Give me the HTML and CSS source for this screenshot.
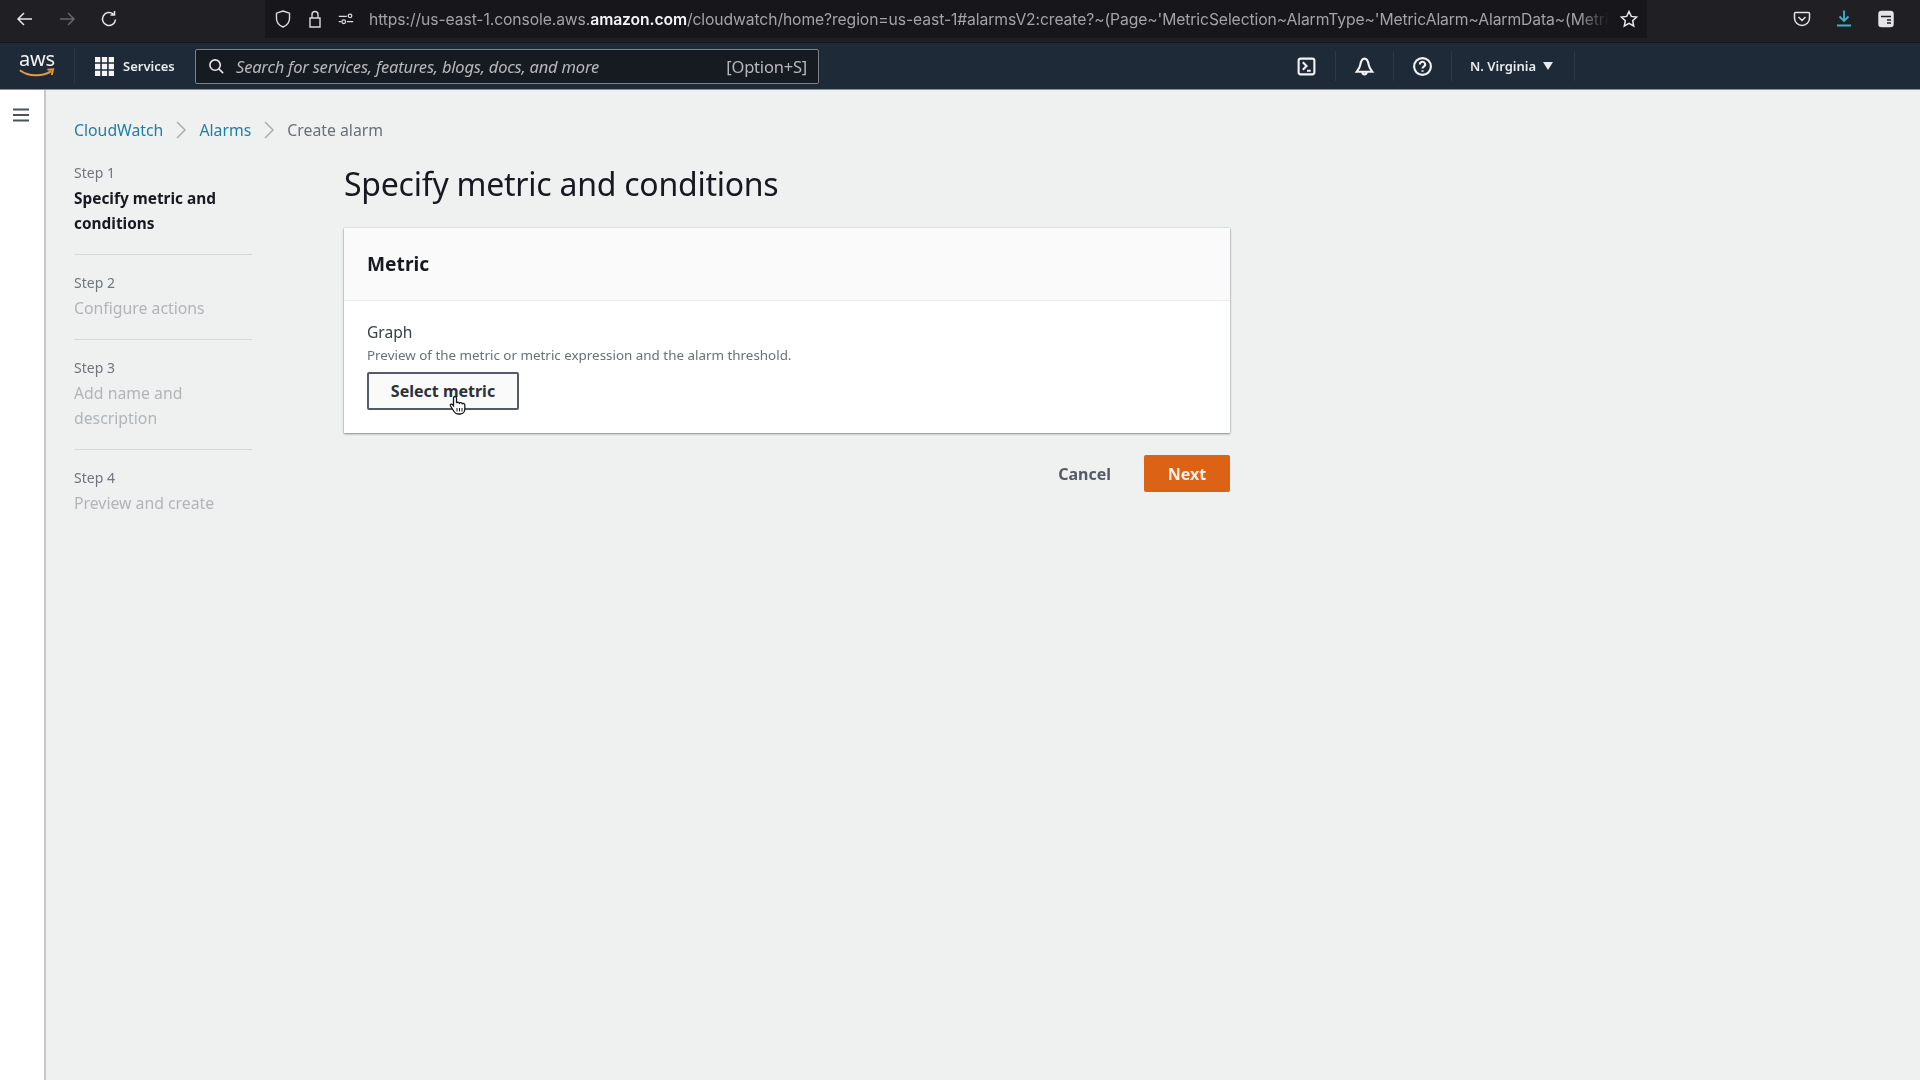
FILE: index.html
```html
<!DOCTYPE html>
<html lang="en">
<head>
<meta charset="utf-8">
<title>Create alarm | CloudWatch</title>
<link rel="stylesheet" href="styles.css">
</head>
<body>
<div class="browser">
  <div class="browser-nav">
    <svg class="bi" viewBox="0 0 20 20"><path d="M17 10H3M9 4l-6 6 6 6"/></svg>
    <svg class="bi dim" viewBox="0 0 20 20"><path d="M3 10h14M11 4l6 6-6 6"/></svg>
    <svg class="bi" viewBox="0 0 20 20"><path d="M16.500 10.500a6.500 6.500 0 1 1-2.200-5.400M15.500 2v4h-4"/></svg>
  </div>
  <div class="urlbar">
    <svg class="ui shield" viewBox="0 0 20 20"><path d="M10 2l6.500 2.200v5.300c0 4-3 7-6.500 8.500-3.500-1.500-6.500-4.500-6.500-8.500V4.200z"/></svg>
    <svg class="ui lock" viewBox="0 0 20 20"><path d="M5 9h10v9H5zM7 9V5.500a3 3 0 0 1 6 0V9"/></svg>
    <svg class="ui perms" viewBox="0 0 20 20"><path d="M2 7h9M2 13h3M11 13h7"/><circle cx="14.500" cy="6.500" r="2"/><circle cx="7.500" cy="13" r="2"/></svg>
    <div class="url">https://us-east-1.console.aws.<b>amazon.com</b>/cloudwatch/home?region=us-east-1#alarmsV2:create?~(Page~'MetricSelection~AlarmType~'MetricAlarm~AlarmData~(Metric</div>
    <svg class="star" viewBox="0 0 20 20"><path d="M10 2.500l2.300 4.900 5.300.7-3.900 3.600 1 5.300-4.700-2.600-4.700 2.600 1-5.300-3.900-3.600 5.300-.7z"/></svg>
  </div>
  <div class="browser-tools">
    <svg class="tool" viewBox="0 0 20 20"><path d="M3.500 3.500h13a1 1 0 0 1 1 1V9a7.500 7.500 0 0 1-15 0V4.500a1 1 0 0 1 1-1zM6.500 8l3.500 3.500L13.500 8"/></svg>
    <svg class="tool dl" viewBox="0 0 20 20"><path d="M10 1.500v10.500M5.500 7.500L10 12l4.500-4.500M3 16.500h14"/></svg>
    <svg class="tool" viewBox="0 0 20 20"><rect x="3" y="2.500" width="14" height="15" rx="2.500" fill="#e4e4e6"/><path class="cut" d="M5 7.500h10M11 11h4M11 14h4"/></svg>
  </div>
</div>

<header class="topnav">
  <div class="logo">
    <span class="logo-text">aws</span>
    <svg class="smile" viewBox="0 0 40 11"><path d="M2 2c9 7 24 7 33 1"/><path d="M31 1.500l6-.5-1.500 6"/></svg>
  </div>
  <div class="services">
    <svg class="grid-ic" viewBox="0 0 18 18"><path d="M0 0h5v5H0zM6.500 0h5v5h-5zM13 0h5v5h-5zM0 6.500h5v5H0zM6.500 6.500h5v5h-5zM13 6.500h5v5h-5zM0 13h5v5H0zM6.500 13h5v5h-5zM13 13h5v5h-5z"/></svg>
    <span>Services</span>
  </div>
  <div class="search">
    <svg class="search-ic" viewBox="0 0 18 18"><circle cx="7.500" cy="7.500" r="5.500"/><path d="M11.500 11.500L16 16"/></svg>
    <span class="search-text">Search for services, features, blogs, docs, and more</span>
    <span class="search-key">[Option+S]</span>
  </div>
  <div class="nav-right">
    <div class="nav-item"><svg class="nav-ic" viewBox="0 0 20 20"><rect x="2.500" y="2.500" width="15" height="15" rx="2"/><path d="M6.500 6l3.500 3.500-3.500 3.500M10.500 14h3.500"/></svg></div>
    <div class="nav-item"><svg class="nav-ic" viewBox="0 0 20 20"><path d="M10 2.500c3 0 3.500 3 4 6s2.500 5 3.500 6.500h-15c1-1.500 3-3.500 3.500-6.500s1-6 4-6zM8 15.500a2 2 0 0 0 4 0"/></svg></div>
    <div class="nav-item"><svg class="nav-ic" viewBox="0 0 20 20"><circle cx="10" cy="10" r="8"/><path d="M7.500 8a2.500 2.500 0 1 1 3.600 2.200c-.8.400-1.100 1-1.100 1.800M10 13.500v1.500"/></svg></div>
    <div class="nav-item region"><span>N. Virginia</span><i class="caret"></i></div>
  </div>
</header>

<div class="page">
  <aside class="rail">
    <svg class="burger" viewBox="0 0 16 14"><path d="M0 1.500h16M0 7h16M0 12.500h16"/></svg>
  </aside>
  <main class="content">
    <nav class="crumbs">
      <a>CloudWatch</a>
      <svg class="chev" viewBox="0 0 10 18"><path d="M1 1l8 8-8 8"/></svg>
      <a>Alarms</a>
      <svg class="chev" viewBox="0 0 10 18"><path d="M1 1l8 8-8 8"/></svg>
      <span>Create alarm</span>
    </nav>
    <div class="wizard">
      <ol class="steps">
        <li class="step"><small>Step 1</small><strong class="active">Specify metric and conditions</strong></li>
        <li class="step"><small>Step 2</small><strong>Configure actions</strong></li>
        <li class="step"><small>Step 3</small><strong>Add name and description</strong></li>
        <li class="step"><small>Step 4</small><strong>Preview and create</strong></li>
      </ol>
      <section class="form">
        <h1>Specify metric and conditions</h1>
        <div class="card">
          <div class="card-head"><h2>Metric</h2></div>
          <div class="card-body">
            <div class="label">Graph</div>
            <div class="desc">Preview of the metric or metric expression and the alarm threshold.</div>
            <button class="btn-select">Select metric
              <svg class="cursor" viewBox="0 0 18 20"><path d="M6 1.500c1 0 1.500.7 1.500 1.500v5c.5-1 2.500-1 3 .2.600-.9 2.400-.7 2.800.5.700-.6 2.500-.2 2.500 1.300v4c0 2.500-1.500 5-4.500 5H9c-2 0-3-1-4-2.500L1.500 11c-.8-1.300.9-2.500 2-1.500l1 1.200V3c0-.8.500-1.500 1.500-1.500z"/><path class="lines" d="M8 13v3.500M10.500 13v3.500M13 13v3.500"/></svg>
            </button>
          </div>
        </div>
        <div class="actions">
          <button class="btn-cancel">Cancel</button>
          <button class="btn-next">Next</button>
        </div>
      </section>
    </div>
  </main>
</div>
</body>
</html>
```
FILE: styles.css
```css
* { box-sizing: border-box; }
html, body { margin: 0; height: 1080px; overflow: hidden; }
body { font-family: "Noto Sans", sans-serif; background: #eff1f0; color: #16191f; filter: blur(.35px); }
svg { display: block; fill: none; }

/* browser chrome */
.browser { height: 43px; background: #1f1f24; display: flex; align-items: flex-start; border-bottom: 1px solid #14161b; }
.browser-nav { width: 265px; height: 38px; display: flex; align-items: center; gap: 22px; padding-left: 15px; }
.bi { width: 20px; height: 20px; stroke: #e6e6e8; stroke-width: 1.5; }
.bi.dim { stroke: #66666b; }
.urlbar { width: 1382px; height: 38px; background: #17171b; display: flex; align-items: center; padding-left: 8px; position: relative; }
.ui { width: 20px; height: 20px; stroke: #dcdcde; stroke-width: 1.4; flex: none; margin-right: 12px; }
.ui.perms { width: 18px; height: 18px; margin-right: 14px; }
.url { font-family: Inter, "Liberation Sans", sans-serif; font-size: 15.700px; color: #a3a3a8; white-space: nowrap; overflow: hidden; width: 1240px; flex: none; letter-spacing: -.1px; -webkit-mask-image: linear-gradient(to right, #000 97.500%, transparent); mask-image: linear-gradient(to right, #000 97.500%, transparent); }
.url b { color: #f5f5f6; font-weight: 600; }
.star { width: 20px; height: 20px; stroke: #e6e6e8; stroke-width: 1.5; margin-left: 10px; flex: none; }
.browser-tools { flex: 1; height: 38px; display: flex; align-items: center; justify-content: flex-end; gap: 22px; padding-right: 24px; }
.tool { width: 20px; height: 20px; stroke: #e4e4e6; stroke-width: 1.5; }
.tool.dl { stroke: #3fb4c4; stroke-width: 1.8; }
.cut { stroke: #1f1f24; }

/* aws nav */
.topnav { height: 47px; background: #1e2a38; border-bottom: 1px solid #8a8e93; display: flex; align-items: center; position: relative; }
.logo { width: 75px; height: 34px; padding-left: 19px; position: relative; border-right: 1px solid #2c3947; flex: none; }
.logo-text { display: block; font-family: "Noto Sans", sans-serif; font-size: 20px; line-height: 20px; color: #f4f4f4; letter-spacing: -.2px; }
.smile { position: absolute; left: 18px; top: 19px; width: 38px; height: 11px; stroke: #e59a3c; stroke-width: 2; }
.services { width: 120px; padding-left: 20px; display: flex; align-items: center; gap: 9px; font-size: 13px; font-weight: 600; color: #e9ebed; flex: none; }
.grid-ic { width: 19px; height: 19px; fill: #f5f5f5; }
.search { width: 624px; height: 35px; background: #161b22; border: 1px solid #7d8188; border-radius: 2px; display: flex; align-items: center; padding: 0 11px 0 12px; flex: none; }
.search-ic { width: 17px; height: 17px; stroke: #e5e7e8; stroke-width: 1.7; flex: none; margin-right: 11px; }
.search-text { font-style: italic; font-size: 16.500px; color: #b6b8bb; flex: 1; white-space: nowrap; letter-spacing: -.2px; }
.search-key { font-size: 16.500px; color: #b6b8bb; white-space: nowrap; letter-spacing: -.2px; }
.nav-right { display: flex; align-items: center; margin-left: 459px; }
.nav-item { height: 30px; width: 58px; display: flex; align-items: center; justify-content: center; border-right: 1px solid #2c3947; flex: none; }
.nav-ic { width: 21px; height: 21px; stroke: #f2f3f3; stroke-width: 2; }
.nav-item.region { width: 123px; justify-content: flex-start; padding-left: 18px; gap: 7px; font-size: 13px; font-weight: 600; color: #e9ebed; }
.caret { width: 0; height: 0; border: 5px solid transparent; border-top: 8px solid #e9ebed; border-bottom: 0; }

/* page */
.page { display: flex; height: 990px; }
.rail { width: 46px; background: #fff; border-right: 2px solid #c6c8c9; padding: 18px 0 0 13px; flex: none; }
.burger { width: 16px; height: 14px; stroke: #4b5259; stroke-width: 2; }
.content { flex: 1; padding: 0 0 0 28px; }
.crumbs { height: 30px; margin-top: 25px; display: flex; align-items: center; font-size: 15.800px; color: #687078; }
.crumbs a { color: #1d7fa5; }
.chev { width: 10px; height: 18px; stroke: #a8acaf; stroke-width: 1.5; margin: 0 13px; }
.wizard { display: grid; grid-template-columns: 178px 886px; column-gap: 92px; margin-top: 11px; }

.steps { list-style: none; margin: 0; padding: 4px 0 0; }
.step { padding-bottom: 18px; margin-bottom: 15.500px; border-bottom: 1px solid #d5d7d8; }
.step:last-child { border: 0; }
.step small { display: block; font-size: 14px; line-height: 25.500px; color: #6f767d; }
.step strong { display: block; font-size: 15.800px; line-height: 25px; font-weight: 400; color: #b0b5b8; }
.step strong.active { font-size: 15.400px; font-weight: 700; color: #16191f; }

.form h1 { margin: 6px 0 0; font-size: 32px; line-height: 44px; font-weight: 400; color: #16191f; letter-spacing: -.25px; }
.card { margin-top: 22px; background: #fff; box-shadow: 0 1px 2px rgba(0,28,36,.45), 0 0 1px rgba(0,28,36,.3); }
.card-head { height: 73px; background: #fafafa; border-bottom: 1px solid #eaeded; padding: 0 23px 2px; display: flex; align-items: center; }
.card-head h2 { margin: 0; font-size: 19.200px; font-weight: 700; }
.card-body { padding: 19px 23px 23px; }
.label { font-size: 15.600px; line-height: 24px; color: #3a4048; }
.desc { font-size: 13.400px; line-height: 22px; color: #687078; }
.btn-select { display: block; margin-top: 6px; position: relative; width: 152px; height: 38px; background: #fafafa; border: 2px solid #545b64; border-radius: 2px; font-family: inherit; font-size: 16px; font-weight: 700; color: #2b3139; padding: 0; }
.cursor { position: absolute; left: 80px; top: 21px; width: 18px; height: 20px; fill: #fff; stroke: #1a1a1a; stroke-width: 1.300; }
.lines { stroke-width: 1; }
.actions { display: flex; justify-content: flex-end; align-items: center; margin-top: 22px; gap: 33px; }
.btn-cancel { background: none; border: 0; padding: 0; font-family: inherit; font-size: 16px; font-weight: 700; color: #545b64; }
.btn-next { width: 86px; height: 37px; background: #dc6316; border: 0; border-radius: 2px; font-family: inherit; font-size: 16px; font-weight: 700; color: #f8efe6; padding: 0; }
```
